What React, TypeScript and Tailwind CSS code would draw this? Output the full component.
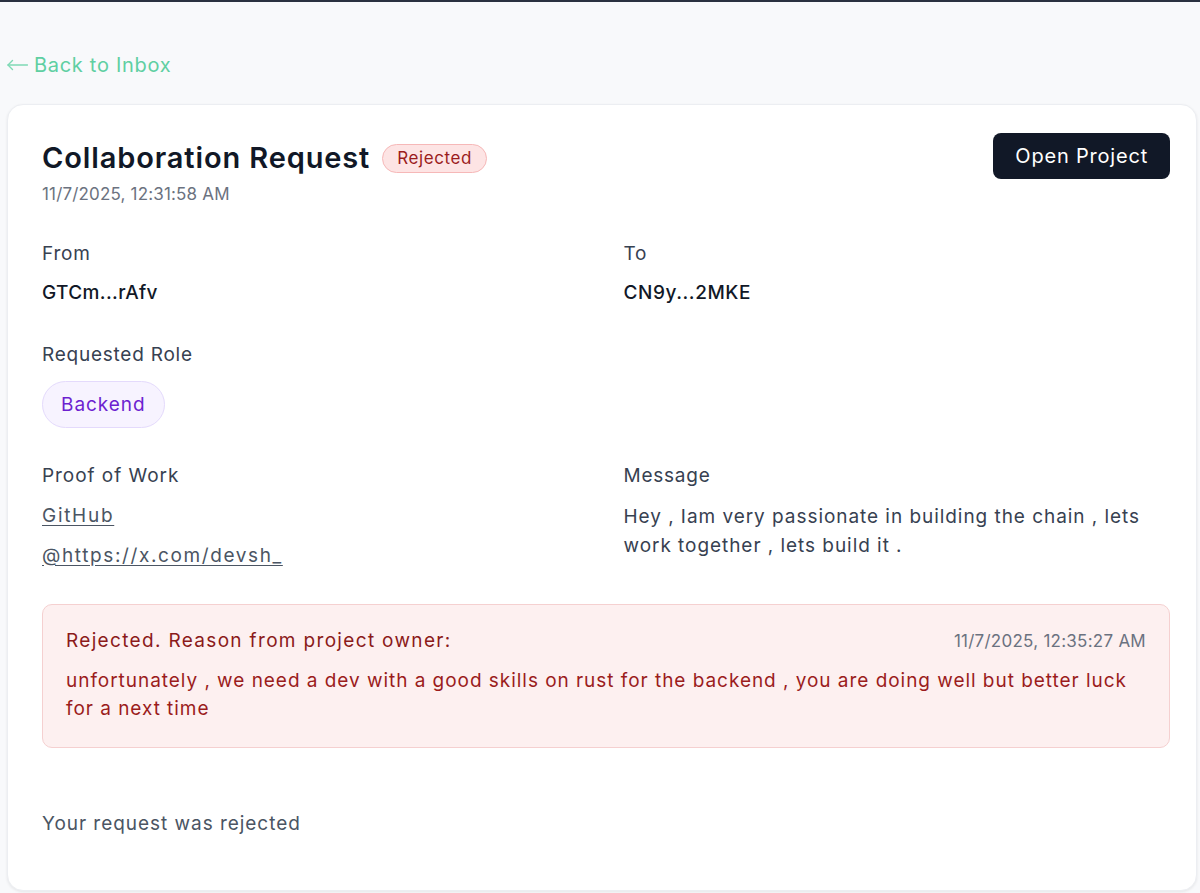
import React from "react";

export default function App() {
  const font = { fontFamily: "Inter, 'Noto Sans', sans-serif" };
  return (
    <div className="min-h-[893px] w-full bg-[#f8f9fb] border-t-2 border-[#2a3140] overflow-hidden tracking-[0.06em]" style={font}>
      <div className="pl-[7px] pr-[3px]">
        <div className="h-[43px]" />
        <a className="flex items-center gap-[6px] text-[20px] leading-[40px] text-[#5fcfa2] tracking-[0.035em]">
          <svg width="21" height="12" viewBox="0 0 21 12" fill="none" stroke="#7ed9b5" strokeWidth="1.4" strokeLinecap="round" strokeLinejoin="round">
            <path d="M20.5 6H1" />
            <path d="M5.5 1.5L1 6l4.5 4.5" />
          </svg>
          <span>Back to Inbox</span>
        </a>
        <div className="h-[19px]" />
        <div className="bg-white rounded-[16px] border border-[#eceef2] shadow-[0_1px_3px_rgba(0,0,0,0.08)] pl-[34px] pr-[26px] pt-[28px] pb-[52px]">
          <div className="flex justify-between items-start">
            <div className="pt-[5px]">
              <div className="flex items-center gap-[12px]">
                <h1 className="text-[29px] leading-[40px] font-semibold text-[#111827] tracking-[0.03em]">Collaboration Request</h1>
                <span className="rounded-full border border-[#f6b8b8] bg-[#fde4e4] text-[#9b1c1c] text-[17px] leading-[27px] px-[14px] tracking-[0.035em]">Rejected</span>
              </div>
              <div className="mt-[4px] text-[17px] leading-[24px] text-[#6b7280] tracking-[0.01em]">11/7/2025, 12:31:58 AM</div>
            </div>
            <button className="bg-[#111827] text-white text-[20px] leading-[46px] px-[22px] rounded-[8px] tracking-[0.04em]">Open Project</button>
          </div>

          <div className="grid grid-cols-2 gap-x-[35px] mt-[34px]">
            <div>
              <div className="text-[19px] leading-[28px] text-[#374151] tracking-[0.04em]">From</div>
              <div className="mt-[11px] text-[19px] leading-[28px] text-[#111827] font-medium tracking-[0.02em]">GTCm...rAfv</div>
            </div>
            <div>
              <div className="text-[19px] leading-[28px] text-[#374151] tracking-[0.04em]">To</div>
              <div className="mt-[11px] text-[19px] leading-[28px] text-[#111827] font-medium tracking-[0.03em]">CN9y...2MKE</div>
            </div>
          </div>

          <div className="mt-[34px]">
            <div className="text-[19px] leading-[28px] text-[#374151] tracking-[0.04em]">Requested Role</div>
            <div className="mt-[12px]">
              <span className="inline-block rounded-full border border-[#e4dafc] bg-[#f7f3ff] text-[#6d1fd0] text-[19px] leading-[45px] px-[18px] tracking-[0.05em]">Backend</span>
            </div>
          </div>

          <div className="grid grid-cols-2 gap-x-[35px] mt-[34px]">
            <div>
              <div className="text-[19px] leading-[28px] text-[#374151] tracking-[0.05em]">Proof of Work</div>
              <div className="mt-[12px] flex flex-col gap-[12px] items-start">
                <a className="text-[19px] leading-[28px] text-[#4b5563] underline underline-offset-[3px] tracking-[0.09em]">GitHub</a>
                <a className="text-[19px] leading-[28px] text-[#4b5563] underline underline-offset-[3px] tracking-[0.085em]">@https://x.com/devsh_</a>
              </div>
            </div>
            <div>
              <div className="text-[19px] leading-[28px] text-[#374151] tracking-[0.04em]">Message</div>
              <div className="mt-[12px] text-[19px] leading-[29px] text-[#374151] tracking-[0.05em]">Hey , Iam very passionate in building the chain , lets work together , lets build it .</div>
            </div>
          </div>

          <div className="mt-[34px] rounded-[10px] border border-[#f5d0d0] bg-[#fdf0f0] px-[23px] pt-[22px] pb-[24px]">
            <div className="flex justify-between items-center">
              <div className="text-[19px] leading-[28px] text-[#8b1a1a] tracking-[0.07em]">Rejected. Reason from project owner:</div>
              <div className="text-[17px] leading-[28px] text-[#6b7280] tracking-[0.015em]">11/7/2025, 12:35:27 AM</div>
            </div>
            <div className="mt-[12px] text-[19px] leading-[28px] text-[#9b1c1c]">unfortunately , we need a dev with a good skills on rust for the backend , you are doing well but better luck for a next time</div>
          </div>

          <div className="mt-[62px] text-[19px] leading-[28px] text-[#4b5563]">Your request was rejected</div>
        </div>
      </div>
    </div>
  );
}
